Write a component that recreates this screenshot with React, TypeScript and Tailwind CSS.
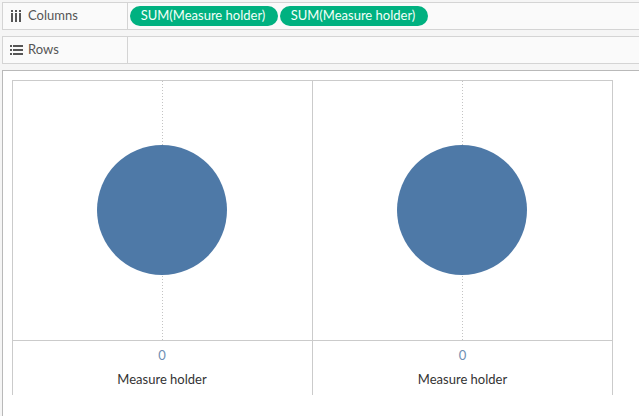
import React from 'react';

const Shelf = ({ label, icon, children }: { label: string; icon: React.ReactNode; children?: React.ReactNode }) => (
  <div className="flex h-7 ml-[2px] border-y border-l border-[#d4d4d4] bg-[#fafafa]">
    <div className="flex w-[125px] shrink-0 items-center border-r border-[#d4d4d4]">
      <div className="flex w-[25px] justify-center pl-[1px] text-[#555]">{icon}</div>
      <span className="text-[13px] text-[#555]">{label}</span>
    </div>
    <div className="flex flex-1 items-center gap-[2px] pl-[2px]">{children}</div>
  </div>
);

const Pill = () => (
  <div className="flex h-5 w-[148px] items-center justify-center rounded-full bg-[#00b180] pr-[2px] text-[13px] text-[#f4fff9]">
    SUM(Measure holder)
  </div>
);

const Pane = ({ last }: { last?: boolean }) => (
  <div className={`flex w-[300px] flex-col ${last ? '' : 'border-r border-[#cbcbcb]'}`}>
    <svg width="300" height="259" viewBox="0 0 300 259" className="block">
      <line x1="149.5" y1="0" x2="149.5" y2="259" stroke="#c4c4c4" strokeDasharray="1 2" />
      <circle cx="149" cy="129" r="65" fill="#4e79a7" />
    </svg>
    <div className="flex flex-1 flex-col items-center border-t border-[#cbcbcb] pr-px">
      <span className="mt-[6px] text-[13px] leading-[16px] text-[#6f8fb3]">0</span>
      <span className="mt-[8px] text-[13px] leading-[16px] text-[#333]">Measure holder</span>
    </div>
  </div>
);

export default function App() {
  return (
    <div className="h-[416px] w-[639px] overflow-hidden bg-[#f5f5f5] pt-[2px] font-['Lato',sans-serif]">
      <Shelf
        label="Columns"
        icon={
          <svg width="10" height="12" viewBox="0 0 10 12" fill="#555">
            <rect x="0" y="3" width="2" height="9" />
            <rect x="4" y="3" width="2" height="9" />
            <rect x="8" y="3" width="2" height="9" />
            <rect x="0" y="0" width="2" height="2" />
            <rect x="4" y="0" width="2" height="2" />
            <rect x="8" y="0" width="2" height="2" />
          </svg>
        }
      >
        <Pill />
        <Pill />
      </Shelf>
      <div className="mt-[6px]">
        <Shelf
          label="Rows"
          icon={
            <svg width="13" height="11" viewBox="0 0 13 11" fill="#555">
              <rect x="0" y="0" width="2" height="2" />
              <rect x="3" y="0" width="10" height="2" />
              <rect x="0" y="4" width="2" height="2" />
              <rect x="3" y="4" width="10" height="2" />
              <rect x="0" y="8" width="2" height="2" />
              <rect x="3" y="8" width="10" height="2" />
            </svg>
          }
        />
      </div>
      <div className="ml-[2px] mt-[6px] h-[346px] border-t border-l border-[#b9b9b9] bg-white pl-[9px] pt-[9px]">
        <div className="flex h-[315px] w-[601px] border-x border-t border-[#cbcbcb]">
          <Pane />
          <Pane last />
        </div>
      </div>
    </div>
  );
}
